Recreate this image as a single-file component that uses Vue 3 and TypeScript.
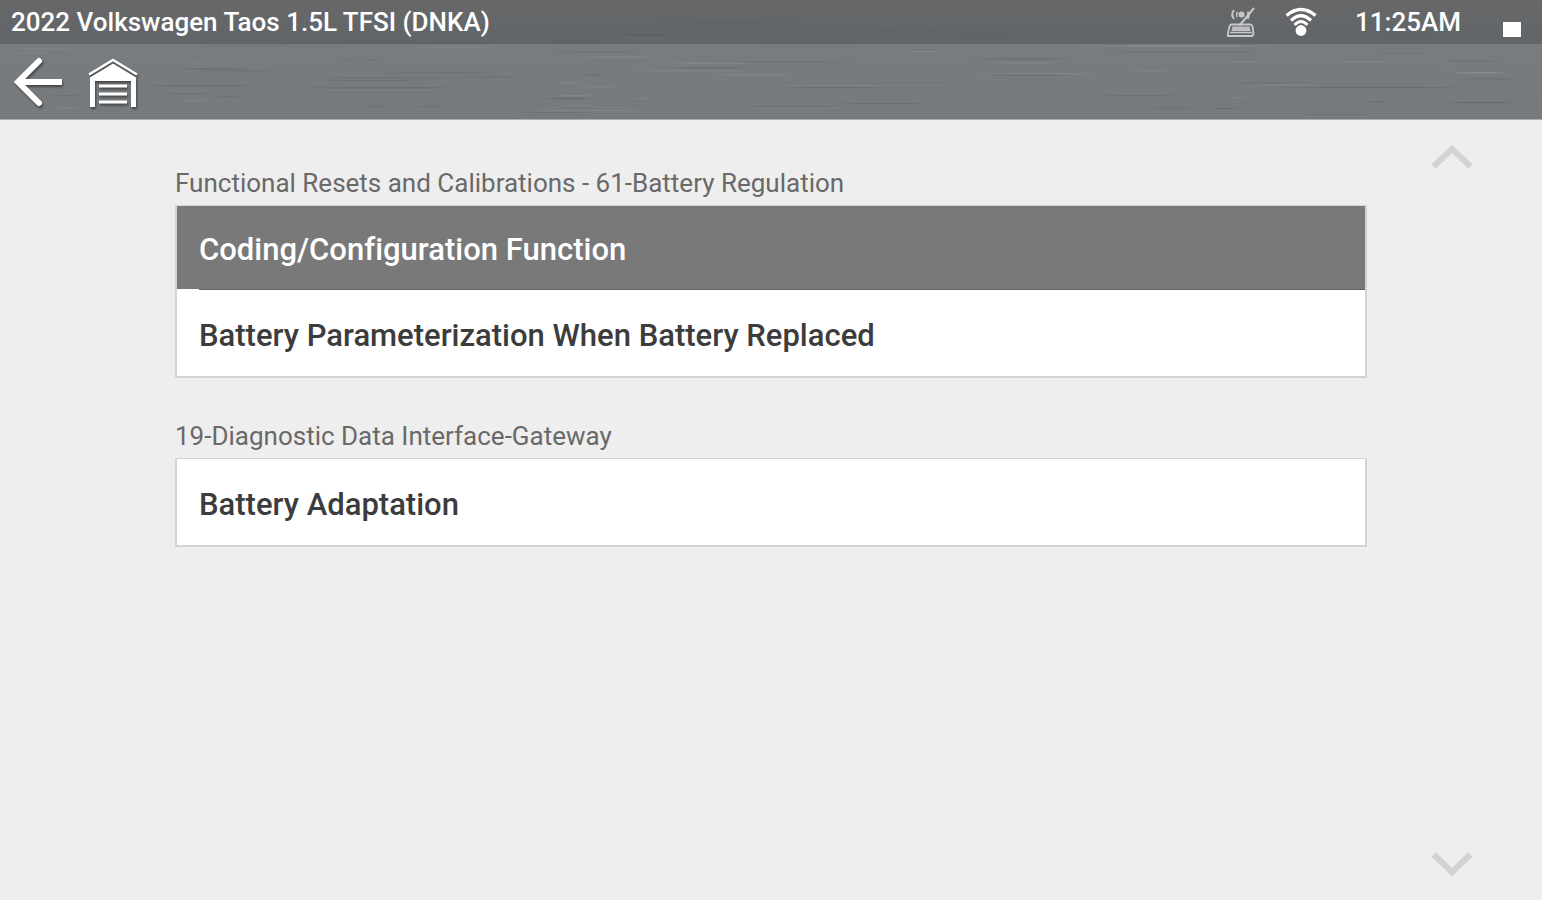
<script setup lang="ts">
import { ref } from 'vue'

interface FunctionItem {
  id: string
  label: string
}

interface FunctionGroup {
  title: string
  items: FunctionItem[]
}

interface Streak {
  x: number
  y: number
  w: number
  light: boolean
  alpha: number
}

const vehicle = '2022 Volkswagen Taos 1.5L TFSI (DNKA)'
const clock = '11:25AM'

const groups: FunctionGroup[] = [
  {
    title: 'Functional Resets and Calibrations - 61-Battery Regulation',
    items: [
      { id: 'coding', label: 'Coding/Configuration Function' },
      { id: 'parameterization', label: 'Battery Parameterization When Battery Replaced' },
    ],
  },
  {
    title: '19-Diagnostic Data Interface-Gateway',
    items: [{ id: 'adaptation', label: 'Battery Adaptation' }],
  },
]

const selected = ref('coding')

// Brushed-metal grain: x, y, width, light (1) or dark (0), opacity in percent
const grain: number[][] = [
  [575, 9, 34, 1, 8], [800, 13, 100, 0, 14], [655, 21, 145, 0, 16], [860, 26, 90, 1, 14],
  [894, 26, 36, 0, 24], [610, 35, 66, 0, 20], [610, 38, 66, 1, 16], [740, 38, 100, 1, 8],
  [735, 43, 130, 0, 16], [545, 42, 60, 0, 18], [270, 43, 240, 0, 18], [940, 36, 80, 0, 14],
  [1365, 38, 75, 0, 16], [1490, 4, 52, 0, 14], [0, 26, 80, 1, 6], [580, 30, 10, 1, 8],
  [545, 52, 100, 0, 16], [580, 57, 75, 1, 16], [580, 61, 70, 0, 16], [8, 49, 70, 1, 16],
  [8, 53, 42, 1, 12], [190, 45, 120, 0, 12], [664, 63, 90, 1, 24], [690, 62, 165, 0, 16],
  [340, 60, 40, 0, 20], [410, 47, 90, 1, 14], [178, 69, 70, 0, 30], [190, 71, 90, 0, 20],
  [370, 73, 130, 0, 20], [634, 71, 116, 1, 18], [660, 68, 90, 0, 20], [710, 75, 85, 1, 20],
  [578, 75, 28, 0, 24], [904, 51, 40, 1, 22], [904, 50, 40, 0, 16], [970, 59, 100, 0, 24],
  [992, 63, 66, 1, 20], [970, 74, 130, 1, 20], [980, 75, 95, 0, 24], [1070, 46, 210, 1, 22],
  [1100, 52, 164, 0, 24], [1130, 71, 40, 1, 14], [1226, 62, 38, 1, 16], [1330, 62, 62, 1, 16],
  [1370, 53, 60, 0, 14], [1440, 61, 60, 0, 18], [1450, 73, 56, 1, 30], [1450, 79, 70, 0, 20],
  [1440, 64, 12, 1, 10], [300, 78, 170, 0, 18], [310, 81, 120, 0, 14], [460, 77, 60, 0, 22],
  [140, 86, 115, 0, 26], [290, 88, 168, 0, 24], [296, 90, 158, 1, 12], [555, 83, 26, 1, 20],
  [580, 87, 36, 1, 14], [776, 88, 114, 0, 24], [776, 86, 114, 1, 12], [850, 83, 110, 0, 14],
  [1225, 83, 90, 0, 22], [1260, 88, 210, 0, 28], [1255, 85, 60, 1, 14], [160, 94, 54, 0, 16],
  [176, 101, 34, 1, 14], [213, 97, 28, 0, 16], [540, 99, 52, 0, 26], [555, 96, 38, 1, 16],
  [632, 99, 20, 1, 14], [740, 107, 100, 0, 28], [742, 108, 110, 1, 14], [830, 104, 100, 0, 20],
  [560, 106, 34, 1, 14], [510, 111, 145, 1, 14], [515, 113, 80, 0, 14], [52, 96, 28, 0, 18],
  [52, 108, 28, 1, 14], [360, 107, 30, 0, 16], [414, 107, 32, 0, 18], [1090, 96, 90, 0, 18],
  [1226, 98, 22, 1, 12], [1360, 102, 30, 0, 16], [1440, 103, 78, 0, 26], [1210, 109, 30, 0, 20],
  [1300, 115, 70, 0, 12], [1140, 109, 60, 0, 14], [190, 64, 18, 1, 14], [350, 60, 20, 1, 16],
]

const streaks: Streak[] = grain.map(([x, y, w, light, alpha]) => ({
  x,
  y,
  w,
  light: light === 1,
  alpha: alpha / 100,
}))
</script>

<template>
  <div class="screen">
    <header class="header">
      <svg class="grain" viewBox="0 0 1542 120" preserveAspectRatio="none" aria-hidden="true">
        <defs>
          <linearGradient id="streak-light">
            <stop offset="0" stop-color="#c4cacc" stop-opacity="0" />
            <stop offset="0.3" stop-color="#c4cacc" />
            <stop offset="0.8" stop-color="#c4cacc" />
            <stop offset="1" stop-color="#c4cacc" stop-opacity="0" />
          </linearGradient>
          <linearGradient id="streak-dark">
            <stop offset="0" stop-color="#34383b" stop-opacity="0" />
            <stop offset="0.3" stop-color="#34383b" />
            <stop offset="0.8" stop-color="#34383b" />
            <stop offset="1" stop-color="#34383b" stop-opacity="0" />
          </linearGradient>
        </defs>
        <rect
          v-for="(s, i) in streaks"
          :key="i"
          :x="s.x"
          :y="s.y"
          :width="s.w"
          height="1"
          :fill="s.light ? 'url(#streak-light)' : 'url(#streak-dark)'"
          :opacity="s.alpha"
        />
      </svg>

      <div class="status-bar">
        <h1 class="vehicle">{{ vehicle }}</h1>
        <div class="status">
          <svg width="30" height="32" viewBox="0 0 30 32" fill="none" stroke="#c6c8ca" aria-label="Scan module disconnected" role="img">
            <path d="M8 4Q4.500 8.500 8 13" stroke-width="2" />
            <path d="M11.500 6Q9.500 8.500 11.500 11" stroke-width="1.500" />
            <path d="M21.500 6Q24 9 21.500 13" stroke-width="2" />
            <circle cx="15.500" cy="8.500" r="3" fill="#c6c8ca" stroke="none" />
            <path d="M28 2 13.500 19.500" stroke-width="2" />
            <path d="M5.500 18.500h18.500q2 0 2.500 2l1 6.500q0 3-2.500 3H2V27l1.500-6.500q.5-2 2-2z" stroke-width="1.800" />
            <path d="M6.500 20.500h17l1 4.500H5.500z" fill="#bdbfc1" stroke="none" />
            <path d="M4 26.500h22" stroke-width="1.500" />
          </svg>
          <svg class="wifi-icon" width="32" height="30" viewBox="0 0 32 30" fill="none" stroke="#fff" stroke-width="3.400" aria-label="Wi-Fi connected" role="img">
            <path d="M1.500 8.500Q16-3.500 30.500 8.500" />
            <path d="M6 13.500Q16 4 26 13.500" stroke-width="3.200" />
            <path d="M9.500 18Q16 11 22.500 18" stroke-width="2.800" />
            <circle cx="16" cy="23.500" r="5.400" fill="#fff" stroke="none" />
          </svg>
          <time class="clock">{{ clock }}</time>
          <span class="battery"></span>
        </div>
      </div>

      <nav class="toolbar">
        <button class="tool" type="button" aria-label="Back">
          <svg width="52" height="56" viewBox="0 0 52 56" fill="none" stroke="#fff" stroke-width="6">
            <path d="M28 7 7 28l21 21" stroke-linecap="round" />
            <path d="M7 28h44" />
          </svg>
        </button>
        <button class="tool" type="button" aria-label="Home">
          <svg width="52" height="56" viewBox="0 0 52 56" fill="none" stroke="#fff">
            <path d="M2 20.500 26 6l24 14.500" stroke-width="2.600" />
            <path d="M3 23.500 26 9.500l23 14V53h-5V27H8v26H3z" fill="#fff" stroke="none" />
            <path d="M12 32h28M12 40h28M12 48h28" stroke-width="3" />
          </svg>
        </button>
      </nav>
    </header>

    <main class="content">
      <div class="groups">
        <section v-for="group in groups" :key="group.title" class="group">
          <h2 class="group-title">{{ group.title }}</h2>
          <ul class="list">
            <li v-for="item in group.items" :key="item.id">
              <button
                class="item"
                :class="{ selected: item.id === selected }"
                type="button"
                @click="selected = item.id"
              >
                {{ item.label }}
              </button>
            </li>
          </ul>
        </section>
      </div>

      <div class="scroll-rail">
        <button class="scroll" type="button" aria-label="Scroll up" disabled>
          <svg width="42" height="28" viewBox="0 0 42 28" fill="none" stroke="#d3d3d3" stroke-width="6">
            <path d="M2.500 23.500 21 6l18.500 17.500" />
          </svg>
        </button>
        <button class="scroll" type="button" aria-label="Scroll down" disabled>
          <svg width="42" height="28" viewBox="0 0 42 28" fill="none" stroke="#d3d3d3" stroke-width="6">
            <path d="M2.500 4.500 21 22 39.500 4.500" />
          </svg>
        </button>
      </div>
    </main>
  </div>
</template>

<style>
body {
  margin: 0;
  background: #eeeeee;
}
</style>

<style scoped>
.screen {
  display: flex;
  flex-direction: column;
  min-height: 100vh;
  background: #eeeeee;
  font-family: Roboto, 'Liberation Sans', sans-serif;
  font-variant-ligatures: none;
}

button {
  box-sizing: border-box;
  margin: 0;
  padding: 0;
  border: 0;
  background: none;
  font: inherit;
  font-variant-ligatures: inherit;
  color: inherit;
}

svg {
  display: block;
}

.header {
  position: relative;
  background: linear-gradient(#797d80, #777a7c);
  border-bottom: 1px solid #a9adae;
  color: #fff;
}

.grain {
  position: absolute;
  inset: 0;
  width: 100%;
  height: 100%;
}

.status-bar {
  position: relative;
  display: flex;
  align-items: center;
  justify-content: space-between;
  height: 44px;
  padding: 0 21px 0 11px;
  background: linear-gradient(rgba(88, 86, 86, 0.55), rgba(74, 78, 82, 0.5));
}

.vehicle,
.clock {
  margin: 0;
  font-size: 26px;
  font-weight: 500;
  line-height: 44px;
  white-space: nowrap;
}

.status {
  display: flex;
  align-items: center;
}

.wifi-icon {
  margin-left: 29px;
}

.clock {
  margin-left: 38px;
}

.battery {
  width: 18px;
  height: 15px;
  margin: 14px 0 0 42px;
  background: #fff;
}

.toolbar {
  position: relative;
  display: flex;
  align-items: center;
  gap: 24px;
  height: 75px;
  padding: 0 11px;
}

.tool {
  cursor: pointer;
  filter: drop-shadow(1px 2px 1px rgba(30, 32, 34, 0.6));
}

.content {
  display: grid;
  flex: 1;
  grid-template-columns: 175px 1fr 175px;
}

.groups {
  grid-column: 2;
  padding-top: 45px;
}

.group {
  margin-bottom: 40px;
}

.group-title {
  margin: 0;
  padding-bottom: 4px;
  font-size: 26px;
  font-weight: 400;
  line-height: 36px;
  color: #696969;
}

.list {
  margin: 0;
  padding: 0;
  list-style: none;
  border: 2px solid #d3d3d3;
  border-top-width: 1px;
  background: #fff;
}

.item {
  display: block;
  width: 100%;
  height: 86px;
  padding: 4px 22px 0;
  font-size: 31px;
  font-weight: 500;
  text-align: left;
  color: #3c3c3c;
  cursor: pointer;
}

.item.selected {
  height: 83px;
  background: #797979;
  color: #fff;
}

li:not(:last-child) {
  padding-bottom: 1px;
  background: linear-gradient(to right, #fff 22px, #636363 22px);
}

.scroll-rail {
  display: flex;
  flex-direction: column;
  align-items: center;
  justify-content: space-between;
  padding: 23px 5px 22px 0;
}
</style>
